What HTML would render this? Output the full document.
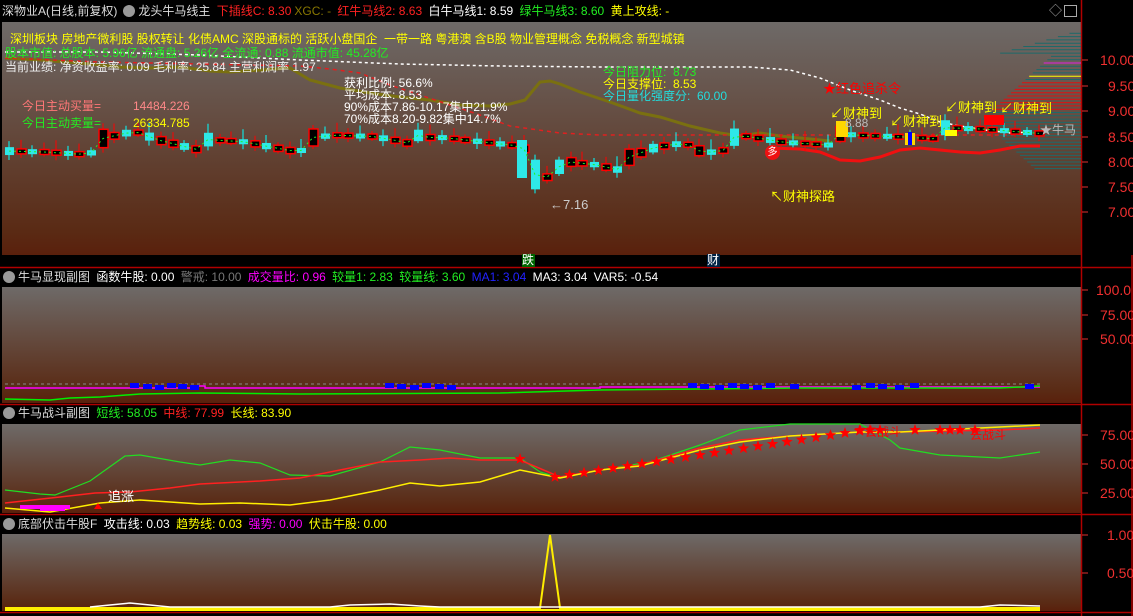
<!DOCTYPE html>
<html><head><meta charset="utf-8"><style>
*{margin:0;padding:0;box-sizing:border-box}
body{width:1133px;height:616px;background:#000;overflow:hidden;position:relative;font-family:"Liberation Sans","Noto Sans CJK SC",sans-serif;font-size:12px;white-space:nowrap}
.g{position:absolute;left:2px;width:1079px;background:linear-gradient(#6e6a68,#5a2a14 90%,#5a200c)}
.t{position:absolute;line-height:14px;font-size:12px}
.hd{position:absolute;left:0;height:18px;line-height:18px;font-size:12px}
.hd span{margin-right:3px}
.ax{position:absolute;left:1100px;color:#f03030;font-size:14px}
.ic{display:inline-block;width:12px;height:12px;border-radius:6px;background:#999;vertical-align:-2px;margin:0 4px 0 3px}
</style></head><body>
<div class="g" style="top:22px;height:233px"></div>
<div class="g" style="top:287px;height:116px"></div>
<div class="g" style="top:424px;height:89px"></div>
<div class="g" style="top:534px;height:77px"></div>
<svg id="s" width="1133" height="616" style="position:absolute;left:0;top:0">
<g stroke="#b00000" stroke-width="1.5">
<line x1="0" y1="267.5" x2="1133" y2="267.5"/><line x1="0" y1="404.5" x2="1133" y2="404.5"/><line x1="0" y1="514.5" x2="1133" y2="514.5"/><line x1="0" y1="612.5" x2="1133" y2="612.5"/>
<line x1="1081.5" y1="0" x2="1081.5" y2="616"/><line x1="1132" y1="255" x2="1132" y2="616"/>
</g>
<g stroke="#e03030"><line x1="1082" y1="60" x2="1088" y2="60"/><line x1="1082" y1="86" x2="1088" y2="86"/><line x1="1082" y1="111" x2="1088" y2="111"/><line x1="1082" y1="137" x2="1088" y2="137"/><line x1="1082" y1="162" x2="1088" y2="162"/><line x1="1082" y1="187" x2="1088" y2="187"/><line x1="1082" y1="212" x2="1088" y2="212"/>
<line x1="1082" y1="290" x2="1088" y2="290"/><line x1="1082" y1="315" x2="1088" y2="315"/><line x1="1082" y1="339" x2="1088" y2="339"/>
<line x1="1082" y1="435" x2="1088" y2="435"/><line x1="1082" y1="464" x2="1088" y2="464"/><line x1="1082" y1="493" x2="1088" y2="493"/>
<line x1="1082" y1="535" x2="1088" y2="535"/><line x1="1082" y1="573" x2="1088" y2="573"/></g>
<g id="chips"></g>
<polyline fill="none" stroke="#7a7010" stroke-width="3" points="5,58 40,60 80,63 120,67 150,68 180,67 210,71 230,72 260,70 290,68 310,80 340,88 370,93 400,97 430,100 460,105 490,106 510,104 525,100 540,82 550,81 560,84 580,92 610,102 640,113 660,117 690,126 720,133 740,136 760,133 780,136 800,138 830,141"/>
<polyline fill="none" stroke="#fff" stroke-width="1.5" stroke-dasharray="3,3" points="5,52 100,52 200,55 300,60 400,64 500,66 600,67 750,67 790,70 820,78 850,90 880,100 900,108 920,114 940,122 960,126 985,130 1010,133 1030,132"/>
<polyline fill="none" stroke="#e02020" stroke-width="1.5" stroke-dasharray="4,4" points="5,58 100,62 200,64 300,66 330,69 360,73 390,85 420,95 450,105 480,115 510,126 560,133 600,135 1000,135 1040,134"/>
<polyline fill="none" stroke="#f01010" stroke-width="3" points="770,148 800,149 820,152 840,160 860,161 880,157 900,150 920,148 940,150 960,152 980,153 1000,150 1020,146 1040,146"/>
<g id="c"></g>
<line x1="5" y1="384" x2="1040" y2="384" stroke="#888" stroke-dasharray="3,3"/>
<polyline fill="none" stroke="#ff00ff" stroke-width="1.5" points="5,388 195,388 195,386 205,386 205,388 600,388 600,387 1040,387"/>
<polyline fill="none" stroke="#00ee00" stroke-width="1.5" points="5,399 50,400 70,398 100,397 140,394 200,393 300,394 500,393 600,390 800,388 1000,388 1040,386"/>
<g id="bl"></g>
<polyline fill="none" stroke="#22dd22" stroke-width="1.2" points="5,490 40,494 55,495 90,481 125,456 140,455 180,462 200,465 230,460 260,463 290,475 330,476 380,462 410,447 440,450 480,458 520,458 540,472 560,478 600,470 650,462 700,445 740,430 790,424 860,424 890,440 900,448 940,455 1000,458 1040,452"/>
<polyline fill="none" stroke="#ff2020" stroke-width="1.5" points="5,503 60,497 95,493 130,492 170,488 200,484 240,482 260,481 300,478 340,470 380,462 420,460 450,458 480,460 520,460 560,477 600,470 640,465 700,448 740,440 790,436 860,432 900,432 1000,430 1040,428"/>
<polyline fill="none" stroke="#ffee00" stroke-width="1.5" points="5,508 50,512 100,503 140,500 200,504 240,503 290,505 330,500 380,490 410,483 440,486 480,482 520,470 560,478 600,470 640,466 700,450 740,442 790,436 860,432 900,432 1000,427 1040,425"/>
<rect x="20" y="505" width="50" height="4" fill="#ff00ff"/><rect x="40" y="507" width="25" height="4" fill="#ff00ff"/>
<polygon points="98,503 94,509 102,509" fill="#f00"/>
<g id="st"></g>
<polyline fill="none" stroke="#ffee00" stroke-width="2" points="5,608 540,608 550,535 560,608 1040,608"/>
<polyline fill="none" stroke="#fff" stroke-width="1.5" points="90,607 110,605 130,603 150,605 170,607 330,607 350,605 390,604 420,606 440,607 980,607 1000,605 1040,606"/>
<line x1="5" y1="610" x2="1040" y2="610" stroke="#ffee00" stroke-width="2"/>
</svg>
<div class="hd" style="top:2px;left:2px;color:#ddd"><span>深物业A(日线,前复权)</span><span class="ic"></span><span>龙头牛马线主</span> <span style="color:#f22">下插线C: 8.30</span><span style="color:#887700">XGC: -</span> <span style="color:#f22">红牛马线2: 8.63</span> <span style="color:#fff">白牛马线1: 8.59</span> <span style="color:#2e2">绿牛马线3: 8.60</span> <span style="color:#ff0">黄上攻线: -</span></div>
<div class="t" style="left:1049px;top:4px;color:#aaa;font-size:13px">◇</div>
<div style="position:absolute;left:1064px;top:5px;width:13px;height:12px;border:1px solid #aaa"></div>
<div class="t" style="left:10px;top:32px;color:#ff0">深圳板块 房地产微利股 股权转让 化债AMC 深股通标的 活跃小盘国企 &nbsp;一带一路 粤港澳 含B股 物业管理概念 免税概念 新型城镇</div>
<div class="t" style="left:5px;top:46px;color:#2e2">股本市值: 总股本: 5.96亿 流通盘: 5.26亿 全流通: 0.88 流通市值: 45.28亿</div>
<div class="t" style="left:5px;top:60px;color:#eee">当前业绩: 净资收益率: 0.09 毛利率: 25.84 主营利润率 1.97</div>
<div class="t" style="left:22px;top:99px;color:#f77">今日主动买量=</div><div class="t" style="left:133px;top:99px;color:#f88">14484.226</div>
<div class="t" style="left:22px;top:116px;color:#2e2">今日主动卖量=</div><div class="t" style="left:133px;top:116px;color:#ff0">26334.785</div>
<div class="t" style="left:344px;top:77px;color:#fff;line-height:12px">获利比例: 56.6%<br>平均成本: 8.53<br>90%成本7.86-10.17集中21.9%<br>70%成本8.20-9.82集中14.7%</div>
<div class="t" style="left:603px;top:66px;color:#2e2;line-height:12px">今日阻力位: &nbsp;8.73</div>
<div class="t" style="left:603px;top:78px;color:#ff0;line-height:12px">今日支撑位: &nbsp;8.53</div>
<div class="t" style="left:603px;top:90px;color:#2dd;line-height:12px">今日量化强度分: &nbsp;60.00</div>
<div class="t" style="left:823px;top:82px;color:#f00;font-size:13px">★红色追杀令</div>
<div class="t" style="left:830px;top:107px;color:#ff0;font-size:13px">↙财神到</div>
<div class="t" style="left:890px;top:115px;color:#ff0;font-size:13px">↙财神到</div>
<div class="t" style="left:945px;top:101px;color:#ff0;font-size:13px">↙财神到</div>
<div class="t" style="left:1000px;top:102px;color:#ff0;font-size:13px">↙财神到</div>
<div class="t" style="left:845px;top:116px;color:#bbb">8.88</div>
<div class="t" style="left:1040px;top:123px;color:#bbb">★牛马</div>
<div class="t" style="left:550px;top:198px;color:#ccc;font-size:13px">←7.16</div>
<div class="t" style="left:770px;top:190px;color:#ff0;font-size:13px">↖财神探路</div>
<div style="position:absolute;left:522px;top:254px;width:13px;height:13px;background:#060;color:#fff;font-size:12px;line-height:13px">跌</div>
<div style="position:absolute;left:707px;top:254px;width:13px;height:13px;background:#024;color:#fff;font-size:12px;line-height:13px">财</div>
<div style="position:absolute;left:765px;top:145px;width:15px;height:15px;border-radius:8px;background:#e11;color:#fff;font-size:10px;line-height:15px;text-align:center">多</div>
<div class="hd" style="top:268px;color:#ddd"><span class="ic"></span><span>牛马显现副图</span> <span style="color:#fff">函数牛股: 0.00</span> <span style="color:#777">警戒: 10.00</span> <span style="color:#f0f">成交量比: 0.96</span> <span style="color:#2e2">较量1: 2.83</span> <span style="color:#2e2">较量线: 3.60</span> <span style="color:#22f">MA1: 3.04</span> <span style="color:#fff">MA3: 3.04</span> <span style="color:#fff">VAR5: -0.54</span></div>
<div class="hd" style="top:404px;color:#ddd"><span class="ic"></span><span>牛马战斗副图</span> <span style="color:#2e2">短线: 58.05</span> <span style="color:#f22">中线: 77.99</span> <span style="color:#ff0">长线: 83.90</span></div>
<div class="t" style="left:108px;top:490px;color:#fff;font-size:13px">追涨</div>
<div class="t" style="left:865px;top:425px;color:#f00;font-size:12px">去战斗</div>
<div class="t" style="left:970px;top:428px;color:#f00;font-size:12px">去战斗</div>
<div class="hd" style="top:515px;color:#ddd"><span class="ic"></span><span>底部伏击牛股F</span> <span style="color:#fff">攻击线: 0.03</span> <span style="color:#ff0">趋势线: 0.03</span> <span style="color:#f0f">强势: 0.00</span> <span style="color:#ff0">伏击牛股: 0.00</span></div>
<div class="ax" style="top:52px">10.00</div><div class="ax" style="top:78px;left:1108px">9.50</div><div class="ax" style="top:103px;left:1108px">9.00</div><div class="ax" style="top:129px;left:1108px">8.50</div><div class="ax" style="top:154px;left:1108px">8.00</div><div class="ax" style="top:179px;left:1108px">7.50</div><div class="ax" style="top:204px;left:1108px">7.00</div>
<div class="ax" style="top:282px;left:1096px">100.0</div><div class="ax" style="top:307px">75.00</div><div class="ax" style="top:331px">50.00</div>
<div class="ax" style="top:427px">75.00</div><div class="ax" style="top:456px">50.00</div><div class="ax" style="top:485px">25.00</div>
<div class="ax" style="top:527px;left:1107px">1.00</div><div class="ax" style="top:565px;left:1107px">0.50</div>
<script>
(function(){
var NS="http://www.w3.org/2000/svg";
function el(p,t,a){var e=document.createElementNS(NS,t);for(var k in a)e.setAttribute(k,a[k]);p.appendChild(e);return e;}
var c=document.getElementById('c');
var key=[[5,155],[40,152],[80,150],[130,133],[160,140],[200,145],[240,143],[290,147],[330,138],[370,135],[400,137],[420,142],[440,140],[480,140],[515,140],[528,178],[545,180],[560,162],[590,162],[620,165],[650,150],[680,142],[700,150],[740,140],[780,142],[820,140],[860,138],[900,135],[940,133],[980,130],[1040,128]];
function yAt(x){for(var i=1;i<key.length;i++){if(x<=key[i][0]){var a=key[i-1],b=key[i];return a[1]+(b[1]-a[1])*(x-a[0])/(b[0]-a[0]);}}return 128;}
var prev=155,pts=[],n=0;
for(var x=5;x<1045;x+=11.7){n++;var y=yAt(x)+((n*37)%9-4)*1.3;var up=(n*13)%5<3;
var h=Math.max(5,Math.abs(y-prev)+4);var tp=y-h/2;
var cx=Math.round(x);el(c,'line',{x1:cx+4,y1:tp-3-(n*11%8),x2:cx+4,y2:tp+h+2+(n*7%4),stroke:up?'#f00':'#0ff'});
el(c,'rect',{x:cx,y:tp,width:9,height:h,fill:up?'#000':'#2ee8e8',stroke:up?'#f00':'none','stroke-width':1.5});
pts.push((cx+4)+','+y);prev=y;}
el(c,'rect',{x:517,y:140,width:10,height:38,fill:'#2ee8e8'});
el(c,'polyline',{points:pts.join(' '),fill:'none',stroke:'#2e2','stroke-dasharray':'2,3'});
el(c,'rect',{x:836,y:121,width:12,height:16,fill:'#ffd700'});el(c,'rect',{x:905,y:133,width:10,height:12,fill:'#ffd700'});
el(c,'rect',{x:908,y:132,width:4,height:13,fill:'#00f'});el(c,'rect',{x:945,y:130,width:12,height:6,fill:'#ff0'});
el(c,'rect',{x:984,y:115,width:20,height:10,fill:'#f00'});
var ch=document.getElementById('chips');
for(var y=30;y<170;y+=3.3){var d=Math.abs(y-120);var w=Math.max(10,100-d*1.1);if(y<55)w=(y-30)*3.5;var col=(y>60&&y<66)?'#e020e0':(y>74&&y<77)?'#ff0':(y>80&&y<110)?'#e01010':'#1d6a6a';
el(ch,'line',{x1:1081-w,y1:y,x2:1081,y2:y,stroke:col,'stroke-width':1});}
var bl=document.getElementById('bl');
[130,143,155,167,178,190,385,397,410,422,435,447,688,700,715,728,740,753,766,790,852,866,878,895,910,1025].forEach(function(x,i){el(bl,'rect',{x:x,y:383+(i%3),width:9,height:5,fill:'#00f'});});
var st=document.getElementById('st');
function star(x,y){var p=[];for(var i=0;i<10;i++){var r=i%2?2.5:6,a=Math.PI*i/5-Math.PI/2;p.push((x+r*Math.cos(a))+','+(y+r*Math.sin(a)));}el(st,'polygon',{points:p.join(' '),fill:'#f00'});}
star(520,459);for(var i=0;i<22;i++){star(555+i*14.5,477-i*2.2);}
[860,870,880,915,940,950,960,975].forEach(function(x){star(x,430);});
})();
</script>
</body></html>
